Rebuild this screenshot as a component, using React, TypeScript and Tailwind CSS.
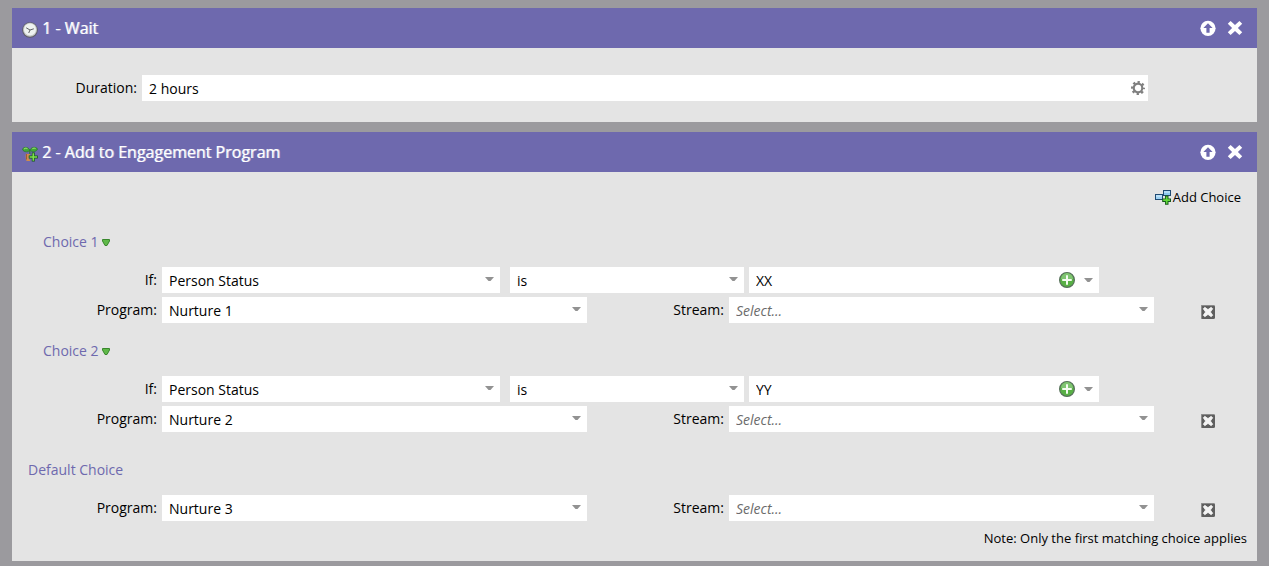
import { useState, type ReactNode } from 'react';

type SelectFieldProps = {
  id?: string;
  label?: string;
  options: string[];
  className: string;
  placeholder?: string;
};

type Choice = {
  id: number;
  value: string;
  program: string;
};

const PROGRAMS = ['Nurture 1', 'Nurture 2', 'Nurture 3'];

const initialChoices: Choice[] = [
  { id: 1, value: 'XX', program: 'Nurture 1' },
  { id: 2, value: 'YY', program: 'Nurture 2' },
];

function ClockIcon() {
  return (
    <svg width="16" height="16" viewBox="0 0 16 16" aria-hidden="true">
      <circle cx="8" cy="8" r="7.8" fill="#5b5a62" />
      <circle cx="8" cy="7.8" r="7" fill="#c2c5c4" />
      <circle cx="8" cy="7.4" r="6" fill="#eef2f0" />
      <path d="M4.2 5.8 8 8l3.8-1.2M8 8l-1.300 3" fill="none" stroke="#5f6064" strokeWidth="1" />
    </svg>
  );
}

function SeedlingIcon() {
  return (
    <svg width="16" height="16" viewBox="0 0 16 16" aria-hidden="true">
      <path d="M4 7.500c1.500 1 3 .5 3.600 0l.6 1.500c-1.500.8-2 1.500-1 4l1.300 2H4.500c-.8-2.500-1.200-5-.5-7.500Z" fill="#d08c4c" />
      <path d="M4.500 8v5.500" stroke="#a35c2e" strokeWidth="1" />
      <path d="M7.800 4v4" stroke="#2c7d28" strokeWidth="1.200" />
      <path d="M.3 3.200C2 .6 6 .6 7.800 4 6.500 6.600 1.800 6.600.3 3.200Z" fill="#3fa535" stroke="#23702a" strokeWidth=".6" />
      <path d="M8 4C9.500.6 14 .6 15.700 3 14 6.300 9.600 6.600 8 4Z" fill="#3fa535" stroke="#23702a" strokeWidth=".6" />
      <path d="M2 3c1-.9 2.500-.9 3.500-.2M10.300 2.800c1-.7 2.500-.8 3.400-.2" fill="none" stroke="#8ad665" strokeWidth="1.200" />
      <path d="M9.800 6.500h3v3h3v3h-3v3h-3v-3h-3v-3h3Z" fill="#14591a" />
      <path d="M11.300 7.300v7.400M7.600 11H15" stroke="#7ee04e" strokeWidth="1.600" />
    </svg>
  );
}

function AddChoiceIcon() {
  return (
    <svg width="16" height="16" viewBox="0 0 16 16" aria-hidden="true">
      <rect x="8.500" y="1.500" width="7" height="5" fill="#8cc8f0" stroke="#1f4a73" />
      <rect x=".5" y="5.500" width="7" height="5" fill="#9fd2f3" stroke="#1f4a73" />
      <path d="M9 3h6M1 7h6" stroke="#d8effc" />
      <path d="M10 6.500h3.500v3H16V13h-2.500v2.800H10V13H7.200V9.500H10Z" fill="#14591a" />
      <path d="M11.700 7.500v7.300M8.200 11.200H15" stroke="#62d83a" strokeWidth="1.700" />
    </svg>
  );
}

function UpIcon() {
  return (
    <svg width="16" height="16" viewBox="0 0 16 16" aria-hidden="true">
      <circle cx="8" cy="8.300" r="7.600" fill="#fff" />
      <path d="M8 3.200 12.600 8H9.600v4.700H6.400V8h-3Z" fill="#6e69ae" />
    </svg>
  );
}

function CloseIcon() {
  return (
    <svg width="16" height="16" viewBox="0 0 16 16" aria-hidden="true">
      <path d="m3.600 1 4.400 4.100L12.400 1 15.200 3.800 10.900 8l4.300 4.200-2.800 2.800L8 10.900 3.600 15 .8 12.200 5.100 8 .8 3.800Z" fill="#fff" />
    </svg>
  );
}

function GearIcon() {
  return (
    <svg width="14" height="14" viewBox="0 0 14 14" aria-hidden="true">
      <circle cx="7" cy="7" r="5.900" fill="none" stroke="#7f7f7f" strokeWidth="2.200" strokeDasharray="2.300 2.334" strokeDashoffset="1.150" />
      <circle cx="7" cy="7" r="4.300" fill="none" stroke="#7f7f7f" strokeWidth="2.200" />
    </svg>
  );
}

function PlusIcon() {
  return (
    <svg width="16" height="16" viewBox="0 0 16 16" aria-hidden="true">
      <circle cx="8" cy="8" r="7.400" fill="#58b045" stroke="#56705a" strokeWidth="1.200" />
      <path d="M2 7a6 6 0 0 1 12 0Z" fill="#7fc471" />
      <path d="M8 3.200v9.600M3.200 8h9.600" stroke="#f4fbf1" strokeWidth="2" />
    </svg>
  );
}

function DeleteIcon() {
  return (
    <svg width="14" height="14" viewBox="0 0 14 14" aria-hidden="true">
      <rect width="14" height="14" rx="1.500" fill="#5f5f5f" />
      <path d="M.5 13V.5H13" fill="none" stroke="#8b8b8b" />
      <path d="M3.800 2.300 7 4.600l3.200-2.300 1.500 1.500L9.400 7l2.300 3.200-1.500 1.500L7 9.400l-3.200 2.300-1.500-1.500L4.600 7 2.300 3.800Z" fill="#f4f4f4" stroke="#f4f4f4" strokeWidth=".8" />
    </svg>
  );
}

function Arrow() {
  return (
    <svg width="9" height="5" viewBox="0 0 9 5" aria-hidden="true">
      <path d="M0 0h9L5.500 4h-2Z" fill="#929292" />
    </svg>
  );
}

function SelectField({ id, label, options, className, placeholder }: SelectFieldProps) {
  const [value, setValue] = useState(placeholder ? '' : options[0]);

  return (
    <div className={`relative ${className}`}>
      <select
        id={id}
        aria-label={label}
        value={value}
        onChange={(e) => setValue(e.target.value)}
        className={`block h-[26px] w-full appearance-none rounded-none bg-white pt-[2px] pr-6 pl-[7px] text-sm outline-none ${
          value ? 'text-black' : 'italic text-[#6b6b6b]'
        }`}
      >
        {placeholder && <option value="">{placeholder}</option>}
        {options.map((option) => (
          <option key={option}>{option}</option>
        ))}
      </select>
      <span className="pointer-events-none absolute top-[10px] right-[6px]">
        <Arrow />
      </span>
    </div>
  );
}

function ProgramRow({ name, program, onDelete }: { name: string; program: string; onDelete?: () => void }) {
  return (
    <div className="flex h-[26px]">
      <label htmlFor={`${name}-program`} className="w-[150px] shrink-0 pr-[5px] text-right leading-[26px]">
        Program:
      </label>
      <SelectField
        id={`${name}-program`}
        options={[program, ...PROGRAMS.filter((p) => p !== program)]}
        className="flex-1"
      />
      <label htmlFor={`${name}-stream`} className="w-[142px] shrink-0 pr-[5px] text-right leading-[26px]">
        Stream:
      </label>
      <SelectField id={`${name}-stream`} options={['Stream 1']} placeholder="Select..." className="flex-1" />
      <div className="flex w-[103px] shrink-0 items-end pb-1 pl-[47px]">
        <button type="button" aria-label="Remove choice" onClick={onDelete}>
          <DeleteIcon />
        </button>
      </div>
    </div>
  );
}

function ChoiceBlock({ choice, onDelete }: { choice: Choice; onDelete: () => void }) {
  const name = `choice-${choice.id}`;

  return (
    <section className="mb-[18px]">
      <button type="button" className="ml-[31px] flex h-5 items-center gap-[3px] text-[#6e69ae]">
        Choice {choice.id}
        <svg width="8" height="7" viewBox="0 0 8 7" aria-hidden="true">
          <path d="M.5.500h7v1.500L5 6.500H3L.5 2Z" fill="#5fb848" stroke="#38872c" />
        </svg>
      </button>
      <div className="mt-[15px] flex h-[26px] pr-[158px]">
        <label htmlFor={`${name}-field`} className="w-[150px] shrink-0 pr-[5px] text-right leading-[26px]">
          If:
        </label>
        <SelectField id={`${name}-field`} options={['Person Status']} className="mr-[10px] flex-[338]" />
        <SelectField label="Operator" options={['is', 'is not']} className="mr-[5px] flex-[234]" />
        <div className="flex flex-[344] items-center bg-white pr-[6px]">
          <input
            aria-label="Value"
            defaultValue={choice.value}
            className="h-[26px] w-full min-w-0 flex-1 bg-transparent pl-[7px] outline-none"
          />
          <button type="button" aria-label="Add value" className="mr-[9px]">
            <PlusIcon />
          </button>
          <button type="button" aria-label="Show values">
            <Arrow />
          </button>
        </div>
      </div>
      <div className="mt-1">
        <ProgramRow name={name} program={choice.program} onDelete={onDelete} />
      </div>
    </section>
  );
}

function Panel({ icon, title, children }: { icon: ReactNode; title: string; children: ReactNode }) {
  return (
    <section className="bg-[#e4e4e4]">
      <header className="flex h-10 items-center bg-[#6e69ae] pr-[14px] pl-[10px] text-white">
        <span className="mt-1 mr-1">{icon}</span>
        <h2 className="flex-1 text-base [text-shadow:1px_0_#ffffff99]">{title}</h2>
        <button type="button" aria-label="Move up" className="mr-[11px]">
          <UpIcon />
        </button>
        <button type="button" aria-label="Close">
          <CloseIcon />
        </button>
      </header>
      {children}
    </section>
  );
}

export default function App() {
  const [choices, setChoices] = useState(initialChoices);

  const addChoice = () => {
    const id = Math.max(0, ...choices.map((c) => c.id)) + 1;
    setChoices([...choices, { id, value: '', program: PROGRAMS[0] }]);
  };

  return (
    <main className="flex min-h-screen flex-col gap-[10px] bg-[#9b9a9e] px-3 pt-2 pb-[5px] font-['Open_Sans',sans-serif] text-sm text-black">
      <Panel icon={<ClockIcon />} title="1 - Wait">
        <div className="flex pt-[27px] pr-[109px] pb-[21px]">
          <label htmlFor="duration" className="w-[130px] shrink-0 pr-[5px] text-right leading-[26px]">
            Duration:
          </label>
          <div className="flex flex-1 items-center bg-white pr-[3px]">
            <input
              id="duration"
              defaultValue="2 hours"
              className="h-[26px] min-w-0 flex-1 bg-transparent pl-[7px] outline-none"
            />
            <button type="button" aria-label="Duration settings">
              <GearIcon />
            </button>
          </div>
        </div>
      </Panel>

      <Panel icon={<SeedlingIcon />} title="2 - Add to Engagement Program">
        <div className="pt-[15px] pb-[13px]">
          <div className="mb-[25px] flex justify-end pr-4">
            <button type="button" onClick={addChoice} className="flex h-5 items-center gap-[2px] text-[13px]">
              <AddChoiceIcon />
              Add Choice
            </button>
          </div>

          {choices.map((choice) => (
            <ChoiceBlock
              key={choice.id}
              choice={choice}
              onDelete={() => setChoices(choices.filter((c) => c.id !== choice.id))}
            />
          ))}

          <h3 className="mt-7 mb-[15px] ml-4 text-[#6e69ae]">Default Choice</h3>
          <ProgramRow name="default" program="Nurture 3" />
          <p className="mt-[7px] pr-[10px] text-right text-[13px] leading-5">
            Note: Only the first matching choice applies
          </p>
        </div>
      </Panel>
    </main>
  );
}
